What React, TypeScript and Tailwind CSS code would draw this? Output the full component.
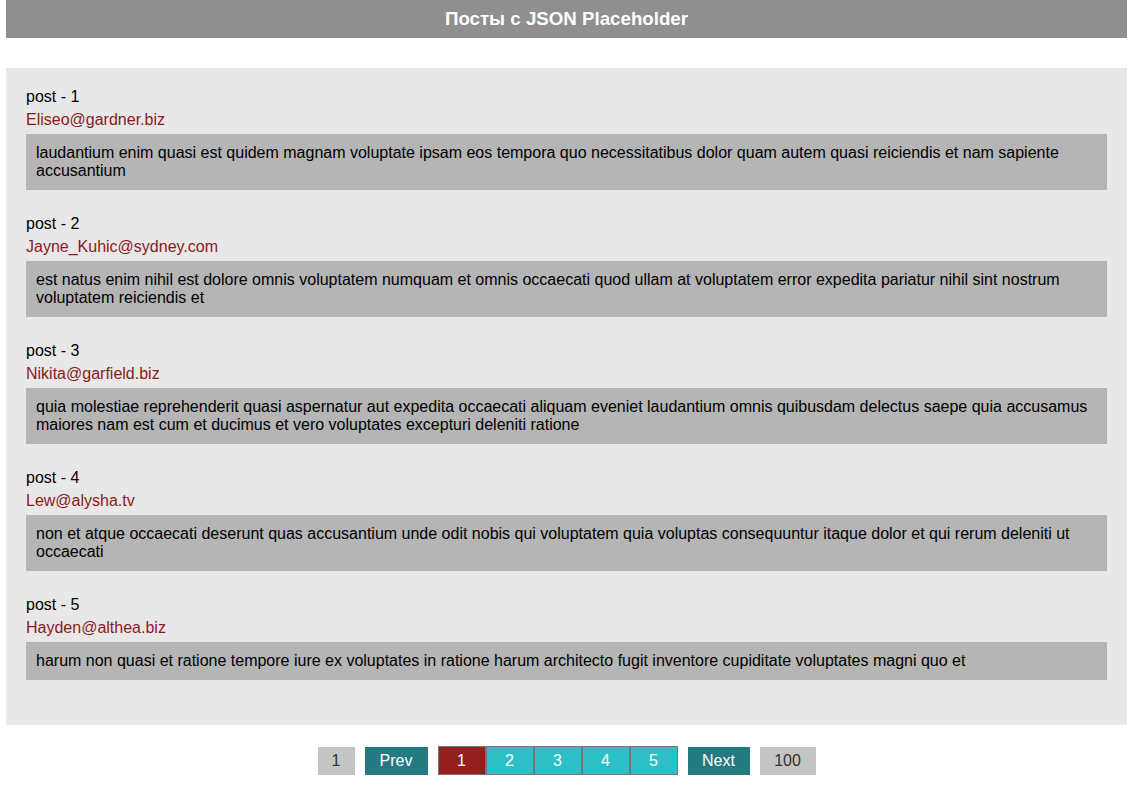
import React from "react";

const posts = [
  {
    id: 1,
    email: "Eliseo@gardner.biz",
    body: "laudantium enim quasi est quidem magnam voluptate ipsam eos tempora quo necessitatibus dolor quam autem quasi reiciendis et nam sapiente accusantium",
  },
  {
    id: 2,
    email: "Jayne_Kuhic@sydney.com",
    body: "est natus enim nihil est dolore omnis voluptatem numquam et omnis occaecati quod ullam at voluptatem error expedita pariatur nihil sint nostrum voluptatem reiciendis et",
  },
  {
    id: 3,
    email: "Nikita@garfield.biz",
    body: "quia molestiae reprehenderit quasi aspernatur aut expedita occaecati aliquam eveniet laudantium omnis quibusdam delectus saepe quia accusamus maiores nam est cum et ducimus et vero voluptates excepturi deleniti ratione",
  },
  {
    id: 4,
    email: "Lew@alysha.tv",
    body: "non et atque occaecati deserunt quas accusantium unde odit nobis qui voluptatem quia voluptas consequuntur itaque dolor et qui rerum deleniti ut occaecati",
  },
  {
    id: 5,
    email: "Hayden@althea.biz",
    body: "harum non quasi et ratione tempore iure ex voluptates in ratione harum architecto fugit inventore cupiditate voluptates magni quo et",
  },
];

export default function App() {
  return (
    <div
      className="min-h-[792px] bg-white pl-[6px] pr-[8px] text-[16px] leading-[18px] text-black"
      style={{ fontFamily: '"Liberation Sans", Arial, sans-serif' }}
    >
      <header className="flex h-[38px] items-center justify-center bg-[#8f8f8f]">
        <h1 className="text-[18.72px] font-bold leading-[20px] text-white">
          Посты с JSON Placeholder
        </h1>
      </header>

      <main className="mt-[30px] bg-[#e8e8e8] px-[20px] pt-[20px] pb-[20px]">
        {posts.map((p) => (
          <div key={p.id} className="mb-[25px] flex flex-col">
            <div className="h-[18px]">post - {p.id}</div>
            <div className="mt-[5px] h-[18px] text-[#8b1a1a]">{p.email}</div>
            <div className="mt-[5px] bg-[#b5b5b5] px-[10px] py-[10px]">{p.body}</div>
          </div>
        ))}
      </main>

      <nav className="mt-[21px] flex items-center justify-center gap-[10px]">
        <button className="flex h-[28px] w-[37px] items-center justify-center bg-[#c4c4c4] text-[#333]">
          1
        </button>
        <button className="flex h-[28px] w-[63px] items-center justify-center bg-[#237a81] text-white">
          Prev
        </button>
        <div className="flex">
          {[1, 2, 3, 4, 5].map((n) => (
            <button
              key={n}
              className={
                n === 1
                  ? "flex h-[29px] w-[48px] items-center justify-center border border-[#777] bg-[#951e1e] text-white"
                  : "flex h-[29px] w-[48px] items-center justify-center border border-[#777] bg-[#2cc0c6] text-white"
              }
            >
              {n}
            </button>
          ))}
        </div>
        <button className="flex h-[28px] w-[62px] items-center justify-center bg-[#237a81] text-white">
          Next
        </button>
        <button className="flex h-[28px] w-[56px] items-center justify-center bg-[#c4c4c4] text-[#333]">
          100
        </button>
      </nav>
    </div>
  );
}
